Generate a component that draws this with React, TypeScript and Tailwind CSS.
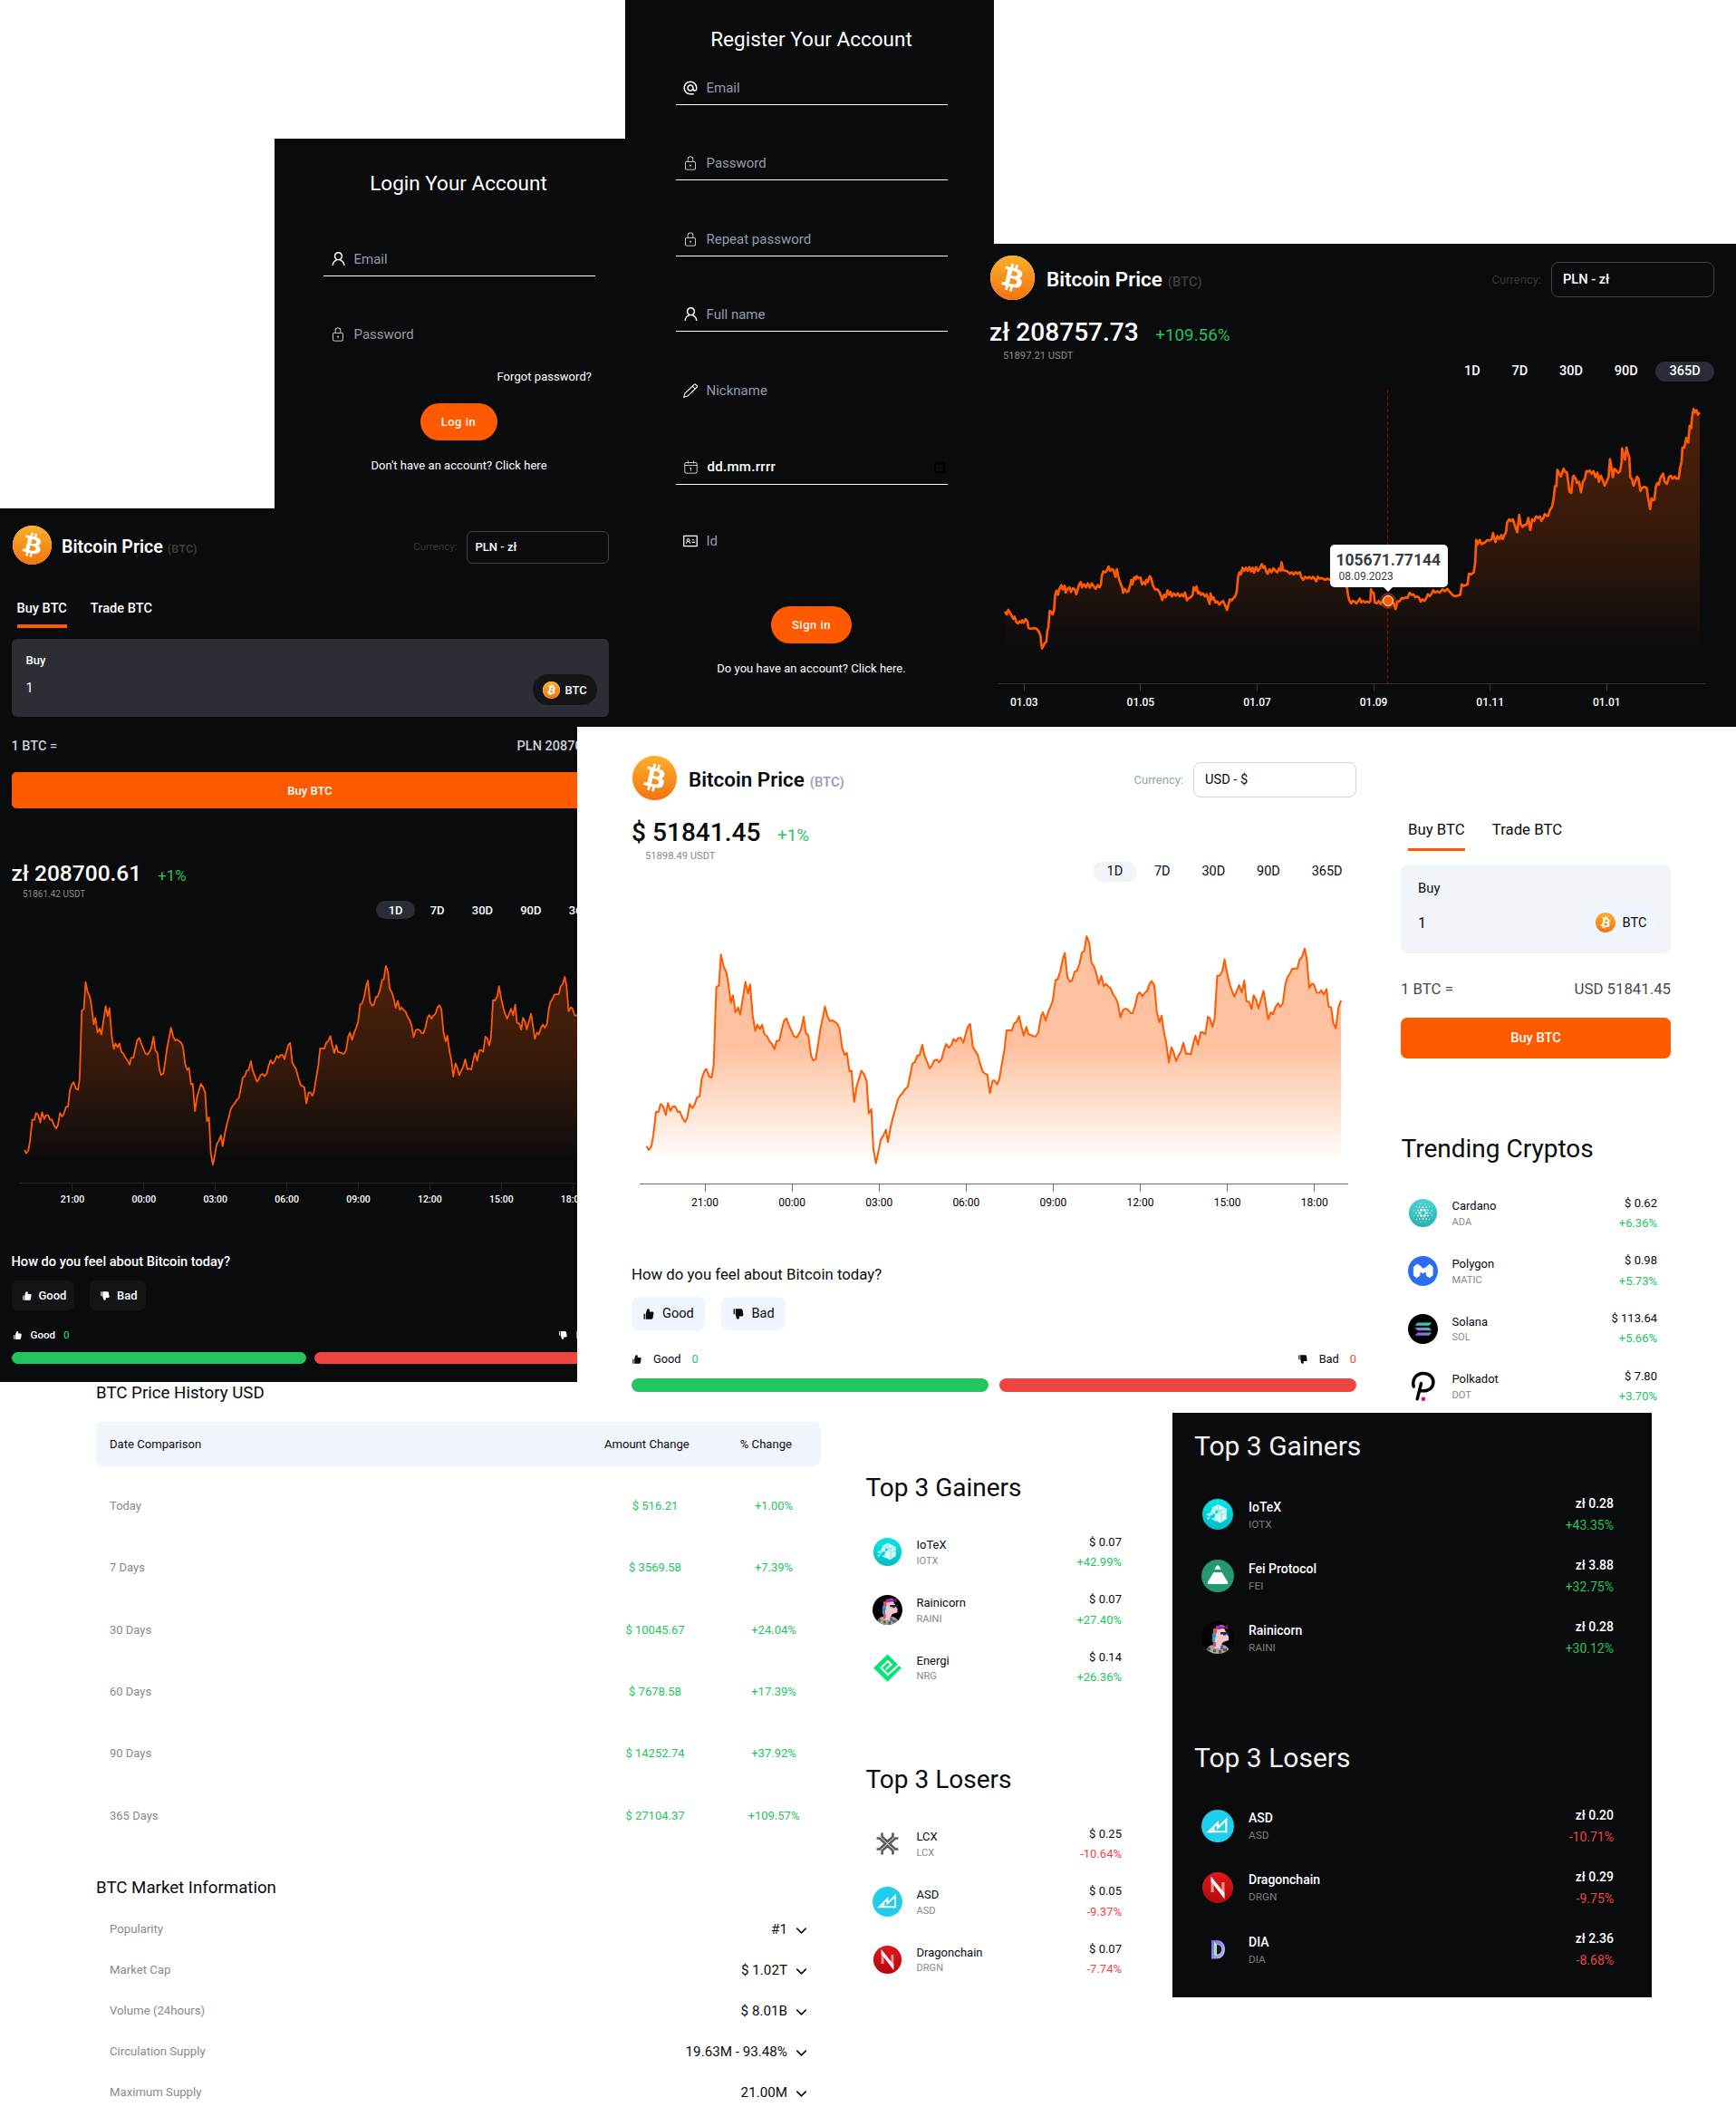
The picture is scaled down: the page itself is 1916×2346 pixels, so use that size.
import React from 'react';
import { AiFillDislike, AiFillLike, AiOutlineIdcard, AiOutlineUser } from 'react-icons/ai';
import { CiCalendarDate, CiLock } from 'react-icons/ci';
import { GoPencil } from 'react-icons/go';
import { MdAlternateEmail } from 'react-icons/md';
import { SiBitcoin } from 'react-icons/si';
import { ChevronDown } from 'lucide-react';

/* ---------- chart data ---------- */

const DAY =
  '130,1380 134,1392 139,1382 143,1345 148,1270 153,1270 157,1245 162,1253 167,1280 171,1242 176,1267 180,1253 185,1253 190,1270 194,1269 199,1290 204,1302 208,1290 213,1245 218,1258 222,1248 227,1224 232,1220 236,1163 241,1140 245,1132 250,1155 255,1160 259,1120 264,870 269,864 273,765 278,803 283,820 287,855 292,920 296,896 301,950 306,935 310,958 320,853 325,890 329,861 334,960 339,1010 343,990 348,1004 352,990 357,1022 362,1028 366,1042 371,1052 376,1068 380,1042 385,1042 390,1005 394,978 399,970 404,993 413,1027 418,1031 422,1022 427,1005 432,965 436,1015 441,1025 446,1087 450,1105 455,1101 460,1050 464,1005 469,965 473,932 478,965 483,979 487,976 492,981 497,988 501,1003 506,1065 511,1087 515,1080 520,1140 524,1138 529,1238 534,1187 538,1165 543,1138 548,1150 553,1170 557,1275 562,1261 566,1390 571,1435 576,1395 580,1360 585,1347 590,1327 594,1367 599,1320 604,1285 608,1262 613,1230 618,1217 622,1210 627,1197 632,1190 636,1158 641,1115 646,1110 650,1090 655,1087 660,1055 664,1088 669,1108 674,1130 678,1123 683,1105 688,1102 692,1111 697,1101 702,1070 706,1052 711,1064 716,1055 720,1036 725,1043 729,1033 734,1032 739,1048 743,1022 748,995 752,988 757,1060 762,1075 766,1085 771,1115 776,1140 780,1147 785,1150 790,1210 795,1170 799,1169 804,1182 808,1165 813,1115 818,1070 822,1008 827,1008 832,1009 837,985 841,982 846,963 850,993 855,1025 860,997 864,1021 869,1023 874,1027 878,1028 883,1015 888,965 892,950 897,977 902,950 906,935 911,912 916,847 920,845 925,820 930,780 934,760 939,838 944,852 948,848 953,820 957,818 962,796 967,758 971,755 976,706 981,728 985,790 990,803 995,828 999,860 1004,834 1009,867 1013,859 1018,868 1022,873 1027,893 1032,905 1036,922 1041,967 1046,942 1050,939 1055,941 1060,952 1064,953 1069,930 1074,893 1078,886 1083,899 1087,889 1092,882 1097,858 1101,850 1106,864 1111,950 1116,983 1120,961 1125,1018 1129,1048 1134,1111 1139,1063 1143,1078 1148,1107 1153,1088 1157,1077 1162,1048 1167,1085 1171,1082 1176,1086 1181,1050 1185,1025 1190,1054 1195,1015 1199,1014 1204,1021 1209,965 1213,970 1218,997 1222,970 1227,832 1232,832 1237,817 1241,780 1246,825 1251,860 1255,880 1260,900 1265,880 1269,863 1274,887 1279,848 1283,915 1288,916 1293,940 1297,896 1302,910 1306,938 1311,910 1316,881 1321,932 1325,973 1330,950 1334,957 1339,933 1344,921 1348,933 1353,921 1358,860 1362,837 1367,825 1371,811 1376,810 1381,810 1385,782 1390,772 1395,746 1399,778 1404,872 1409,858 1413,862 1418,887 1423,888 1427,880 1432,893 1437,876 1441,932 1446,935 1450,985 1455,1001 1460,935 1465,912';

const YEAR =
  '54,435 58,445 61,430 65,440 69,452 72,460 74,452 78,470 81,475 85,468 88,472 90,464 93,472 97,460 101,468 103,490 108,492 114,490 120,492 125,503 128,515 129,535 131,557 134,548 137,540 140,535 142,498 144,490 147,433 150,436 153,445 156,430 158,382 161,366 164,380 167,360 171,348 174,362 178,350 180,372 184,360 188,355 191,370 195,358 199,362 202,378 205,362 208,345 211,338 214,355 218,345 222,355 226,342 230,356 234,342 238,352 242,360 246,348 250,355 253,345 255,315 258,302 262,305 265,300 269,286 272,300 276,295 279,298 283,320 286,295 289,320 293,340 297,355 299,373 302,360 306,370 310,368 314,345 316,330 318,345 322,322 325,328 327,318 331,325 335,322 338,345 342,338 345,345 347,330 350,338 354,318 357,325 361,350 365,362 370,362 374,370 378,385 380,397 384,380 387,388 391,365 394,380 397,370 400,385 404,375 408,383 412,375 416,385 420,378 424,385 427,372 431,398 435,390 439,388 443,380 445,355 448,365 451,352 454,375 457,370 460,380 464,375 468,385 472,378 475,395 478,410 480,375 483,395 486,388 490,405 494,402 498,412 502,405 506,400 510,415 514,430 517,412 520,395 524,398 528,390 531,385 534,370 537,320 540,305 543,312 546,290 550,300 553,290 557,300 560,288 564,302 567,290 570,306 574,288 578,300 582,292 586,278 589,290 592,285 595,302 598,310 602,295 606,305 610,292 614,300 618,305 622,292 625,300 627,272 630,298 635,300 640,303 644,310 648,305 652,312 656,305 660,310 665,305 668,322 672,330 676,320 680,325 684,320 688,326 692,320 696,328 699,335 702,320 706,326 710,324 714,328 718,330 722,326 727,330 740,325 750,330 760,345 763,360 765,385 768,400 771,408 774,400 778,402 782,408 786,400 789,392 792,405 796,400 800,405 804,402 808,405 811,400 812,362 815,372 818,375 820,405 824,408 828,400 832,410 836,402 840,398 847,400 855,402 860,410 863,427 867,402 872,400 876,390 880,392 884,388 888,390 892,373 896,380 900,378 904,388 908,385 912,390 915,402 919,395 923,400 927,390 930,378 934,384 938,375 941,365 945,372 950,368 955,372 960,362 965,368 970,360 974,368 978,375 982,382 987,385 992,382 997,380 1000,345 1004,350 1008,348 1012,345 1015,310 1020,312 1025,305 1028,270 1030,198 1033,212 1037,198 1041,212 1045,208 1049,205 1053,198 1058,200 1062,195 1065,175 1067,190 1070,205 1074,185 1078,195 1082,182 1085,195 1089,180 1092,170 1094,140 1098,130 1102,135 1106,130 1110,150 1115,172 1119,115 1122,145 1126,155 1130,148 1134,148 1138,125 1142,165 1146,130 1150,135 1154,120 1158,125 1162,120 1165,135 1169,125 1172,112 1176,118 1179,118 1183,98 1187,88 1190,65 1193,20 1196,20 1198,-35 1202,-22 1205,-12 1208,-25 1211,-38 1214,-28 1218,-25 1221,10 1223,38 1227,42 1230,-10 1232,-15 1236,-5 1239,10 1243,5 1247,40 1251,5 1255,-5 1258,-30 1262,-28 1265,-32 1269,-22 1273,-30 1277,-10 1281,-25 1284,5 1288,-15 1292,0 1296,18 1300,5 1304,-10 1307,-70 1310,-40 1313,-10 1316,-38 1320,-32 1324,-25 1328,-30 1331,-60 1332,-105 1335,-85 1338,-68 1341,-108 1344,-90 1347,-75 1349,-10 1352,-5 1356,18 1359,5 1363,-12 1366,-5 1370,35 1374,25 1378,22 1383,25 1386,60 1390,96 1393,60 1396,66 1399,65 1402,20 1405,10 1408,15 1411,-5 1414,-15 1417,-22 1420,5 1425,12 1429,-10 1433,-15 1437,-5 1441,-12 1445,-5 1449,-5 1452,-40 1455,-60 1457,-108 1461,-108 1465,-140 1469,-125 1472,-180 1475,-172 1477,-210 1480,-236 1483,-225 1486,-232 1489,-218 1493,-224';

/* ---------- icons ---------- */

function BitcoinLogo({ className }: { className: string }) {
  return (
    <span className={`block shrink-0 rounded-full bg-white ${className}`}>
      <svg className="absolute size-0">
        <defs>
          <linearGradient id="btc" x1="0" y1="0" x2="0" y2="1">
            <stop offset="0" stopColor="#fbb02a" />
            <stop offset="1" stopColor="#f4730f" />
          </linearGradient>
        </defs>
      </svg>
      <SiBitcoin className="size-full" fill="url(#btc)" />
    </span>
  );
}

const dots = (n: number, r: number, size: number, turn = 0) =>
  Array.from({ length: n }, (_, i) => {
    const a = ((i * 360) / n + turn) * (Math.PI / 180);
    return <circle key={`${r}-${turn}-${i}`} cx={18 + r * Math.cos(a)} cy={18 + r * Math.sin(a)} r={size} fill="#fff" />;
  });

const coinArt: Record<string, React.ReactNode> = {
  ADA: (
    <>
      <linearGradient id="ada" x1="0" y1="0" x2="0" y2="1">
        <stop offset="0" stopColor="#4cd5d2" />
        <stop offset="1" stopColor="#27b0ad" />
      </linearGradient>
      <circle cx="18" cy="18" r="17" fill="url(#ada)" />
      {dots(6, 3.9, 1.5)}
      {dots(6, 6.8, 1, 30)}
      {dots(6, 8.2, 0.8)}
      {dots(12, 11, 0.6, 15)}
    </>
  ),
  MATIC: (
    <>
      <circle cx="18" cy="18" r="18" fill="#2a6df4" />
      <path
        d="M7 13.2 11 10l3.5 1.8L18 15.5l3.5-1.5L26 10l3.6 3v10.2L26 26l-3.8-2.6v-5L18 20.6l-3.8-2.2v4.8L10.6 26 7 23.4z"
        fill="#fff"
        stroke="#fff"
        strokeLinejoin="round"
      />
    </>
  ),
  SOL: (
    <>
      <linearGradient id="sol" x1="0" y1="1" x2="0.6" y2="0">
        <stop offset="0" stopColor="#b345e8" />
        <stop offset="0.55" stopColor="#6f93cf" />
        <stop offset="1" stopColor="#20dca0" />
      </linearGradient>
      <circle cx="18" cy="18" r="18" fill="#000" />
      <path d="M11.5 10.3h17.2l-3.3 3.5H8.2zM8.2 16.3h17.2l3.3 3.5H11.5zM11.5 22.3h17.2l-3.3 3.5H8.2z" fill="url(#sol)" />
    </>
  ),
  DOT: (
    <>
      <path
        d="M6.800 18.500C4.500 10 10 2.600 18.500 2.600c7 0 12 4.700 12 10.600 0 6.300-4.700 10.500-12.200 10.500h-3M15.800 14.800 11.200 33.500"
        fill="none"
        stroke="#000"
        strokeWidth="3.800"
        strokeLinecap="round"
      />
      <circle cx="18.500" cy="33.500" r="2.400" fill="#e6007a" />
    </>
  ),
  IOTX: (
    <>
      <linearGradient id="iotx" x1="0" y1="0" x2="0" y2="1">
        <stop offset="0" stopColor="#02e6e6" />
        <stop offset="1" stopColor="#04bcc4" />
      </linearGradient>
      <circle cx="18" cy="18" r="17" fill="url(#iotx)" />
      <path d="M18.500 7 28 12v11l-7 4.500-6-3V18l-4-3.500 1-4z" fill="#d8fbfb" />
      <path d="M18.500 7v7l9.500-2M15 18l7-4v13M22 19l6-3M11 10.500l7.500 3.500-3.500 4" stroke="#6fe3e6" strokeWidth="0.900" fill="none" />
      <path d="m10 14 5 3-5 2.500zM5 18l5-2v5zM11 23l4-2 1 5zM6 21l4 .5-3 3z" fill="#9cf1f1" />
      <path d="m16 13 3 3-4 1z" fill="#02ccd2" />
    </>
  ),
  RAINI: (
    <>
      <clipPath id="rc">
        <circle cx="18" cy="18" r="18" />
      </clipPath>
      <g clipPath="url(#rc)">
        <path d="M0 0h36v36H0z" fill="#000" />
        <path d="M5 36c0-7 4-10 9-10h8c5 0 9 3 10 10z" fill="#a9a48f" />
        <path d="M7 29h3v3H7zM13 31h3v3h-3zM24 30h4v3h-4zM19 32h3v4h-3z" fill="#5c5a52" />
        <path d="M16 8h9l5 9v4l-6 2-2 3v4h-7V18z" fill="#f3c5cd" />
        <path d="M20 4h4l3 3h-6z" fill="#c43dd0" />
        <path d="M16 5h5v4h-5z" fill="#a12bc9" />
        <path d="M13 8h4v5h-4z" fill="#e05a35" />
        <path d="M12 13h4v5h-4z" fill="#2f8fe0" />
        <path d="M12 18h3v5h-3z" fill="#19b5c4" />
        <path d="M13 23h3v5h-3z" fill="#e04a70" />
        <path d="M21 12h9v2.500h-3v1h-3v-1h-3z" fill="#1f2b45" />
        <path d="m26 8 3-6v7z" fill="#8c2440" />
        <path d="M21 27h3v4h-3z" fill="#3564d8" />
      </g>
    </>
  ),
  NRG: (
    <>
      <path d="M18 1.500 34.800 18 18 34.500 1.200 18z" fill="#00e676" />
      <path d="M36 10.500 18.500 26.300l-8.300-8.500 8-7.800 4.300 4-6.300 5.700" fill="none" stroke="#fff" strokeWidth="2.300" />
      <path d="m30 9.500 6-4v7.500l-2.500 1.500z" fill="#fff" />
    </>
  ),
  LCX: (
    <g fill="none" stroke="#5a5a5a" strokeWidth="2.800">
      <path d="M11.500 5v4.500L18 15.500l6.500-6V5M11.500 31v-4.500L18 20.500l6.500 6V31" />
      <path d="M5 11.500h3.500l7 6.500-7 6.500H5M31 11.500h-3.500l-7 6.500 7 6.500H31" />
    </g>
  ),
  ASD: (
    <>
      <circle cx="18" cy="18" r="18" fill="#1fcdec" />
      <path d="M8 24.200 18 14.500v5.500L27.300 11v13.200zM13.500 24v-3.500" fill="none" stroke="#fff" strokeWidth="2.100" />
    </>
  ),
  DRGN: (
    <>
      <linearGradient id="drgn" x1="0" y1="0" x2="0" y2="1">
        <stop offset="0" stopColor="#e0161a" />
        <stop offset="1" stopColor="#b00a0e" />
      </linearGradient>
      <circle cx="18" cy="18" r="17" fill="url(#drgn)" />
      <path d="M10.500 9.500h3.200V23h-3.200zM22.300 12h3.200v13h-3.200z" fill="#ef8e90" />
      <path d="M10.500 5.500 25.500 24v6.500L10.500 11z" fill="#fff" />
    </>
  ),
  FEI: (
    <>
      <circle cx="18" cy="18" r="18" fill="#22996e" />
      <path d="M16.800 6.500h2.400L21.500 11h-7zM13.500 14h9l6.500 10.500V27H7v-2.500z" fill="#fff" />
    </>
  ),
  DIA: (
    <>
      <linearGradient id="dia" x1="0" y1="0" x2="1" y2="0.600">
        <stop offset="0" stopColor="#7a5cf0" />
        <stop offset="1" stopColor="#b3b8ea" />
      </linearGradient>
      <path d="M11 8h6c6 0 9 4.500 9 10s-3.500 10.500-9 10.500h-6z" fill="url(#dia)" />
      <path d="M17 13c3.600.3 5 2 5 5.200s-1.700 5-5 5.300z" fill="#14121f" />
      <path d="M14 9.500 17 12v14l-3-2z" fill="#a8e6b4" />
    </>
  ),
};

/* ---------- account forms ---------- */

type FieldProps = { icon: React.ReactNode; label: string; line?: boolean; className?: string; date?: boolean };

function Field({ icon, label, line = true, className = '', date = false }: FieldProps) {
  return (
    <div
      className={`flex h-[38px] w-[300px] items-center gap-[9px] border-b pl-2 ${line ? 'border-white' : 'border-transparent'} ${className}`}
    >
      <span className="flex size-4 items-center justify-center text-white">{icon}</span>
      {date ? (
        <>
          <span className="pl-[1.500px] text-[15px] leading-none font-medium tracking-[0.300px] text-white">{label}</span>
          <svg viewBox="0 0 12 13" className="mr-[3px] ml-auto h-[13px] w-3" fill="none" stroke="#000" strokeWidth="1.500">
            <path d="M1 2h10v10H1zM1 3h10M3 0v2M9 0v2" />
          </svg>
        </>
      ) : (
        <span className="pt-0.5 pl-[0.500px] text-[15px] leading-none text-[#939cab]">{label}</span>
      )}
    </div>
  );
}

function LoginPanel() {
  return (
    <section className="absolute top-[153px] left-[303px] flex h-[420px] w-[408px] flex-col items-center bg-[#0a0b0d] text-white">
      <h2 className="mr-0.5 flex h-[98px] items-center text-[22.500px] leading-none">Login Your Account</h2>
      <Field className="mt-4" icon={<AiOutlineUser size={19} className="shrink-0" />} label="Email" />
      <Field className="mt-[45px]" icon={<CiLock size={18} className="shrink-0" />} label="Password" line={false} />
      <div className="mt-[18px] flex h-5 w-[292px] items-center justify-end text-[13px] tracking-[0.050px]">Forgot password?</div>
      <button className="mt-[19px] mr-0.5 h-[41px] w-[85px] rounded-full bg-[#ff5a00] text-[13px] font-medium tracking-[0.500px]">
        Log in
      </button>
      <p className="mt-[18px] mr-px text-[13px] leading-5 tracking-[0.040px]">Don&apos;t have an account? Click here</p>
    </section>
  );
}

function RegisterPanel() {
  return (
    <section className="absolute top-0 left-[690px] h-[802px] w-[407px] bg-[#0a0b0d] text-white">
      <div className="flex w-[412px] flex-col items-center">
        <h2 className="mt-7 mr-px h-[30px] text-[22.500px] leading-[30px]">Register Your Account</h2>
        <Field className="mt-5" icon={<MdAlternateEmail size={18} className="shrink-0" />} label="Email" />
        <Field className="mt-[45px]" icon={<CiLock size={18} className="shrink-0" />} label="Password" />
        <Field className="mt-[46px]" icon={<CiLock size={18} className="shrink-0" />} label="Repeat password" />
        <Field className="mt-[45px]" icon={<AiOutlineUser size={19} className="shrink-0" />} label="Full name" />
        <Field className="mt-[46px]" icon={<GoPencil size={18} className="shrink-0" />} label="Nickname" line={false} />
        <Field className="mt-[47px]" icon={<CiCalendarDate size={19} className="shrink-0" />} label="dd.mm.rrrr" date />
        <Field className="mt-[43px]" icon={<AiOutlineIdcard size={18} className="shrink-0" />} label="Id" line={false} />
        <button className="mt-[53px] mr-px h-[41px] w-[89px] rounded-full bg-[#ff5a00] text-[13px] font-medium tracking-[0.500px]">
          Sign in
        </button>
        <p className="mt-[18px] mr-px text-[13px] leading-5 tracking-[0.040px]">Do you have an account? Click here.</p>
      </div>
    </section>
  );
}

/* ---------- price blocks ---------- */

function PriceHeader({ dark, small, currency }: { dark?: boolean; small?: boolean; currency: string }) {
  return (
    <div className={`flex items-center ${small ? 'h-[47px]' : 'h-[53px]'}`}>
      <BitcoinLogo className={small ? 'ml-[1.500px] size-[43px] self-start' : 'ml-px size-[49px] self-start'} />
      <div className={`flex items-baseline ${small ? 'ml-[11px] gap-[5px]' : 'ml-[13px] gap-1.5'}`}>
        <h1
          className={`leading-none font-semibold ${small ? 'text-[19.600px]' : 'text-[22.400px]'} ${dark ? 'text-white' : 'text-[#0a0b0d]'}`}
        >
          Bitcoin Price
        </h1>
        <span
          className={`leading-none font-semibold ${small ? 'text-[12.800px]' : 'text-[14.800px]'} ${dark ? 'text-[#3f3b38]' : 'text-[#94a3b8]'}`}
        >
          (BTC)
        </span>
      </div>
      <span
        className={`ml-auto leading-none ${small ? 'mr-[10px] text-[11.500px]' : 'mr-[11px] text-[13px]'} ${dark ? 'text-[#3a3633]' : 'text-[#94a3b8]'}`}
      >
        Currency:
      </span>
      <div
        className={`flex items-center border leading-none ${small ? 'h-9 w-[157px] rounded-[6px] pl-[9px] text-[13px]' : 'h-[39px] w-[180px] rounded-lg pl-3 text-[14.600px]'} ${dark ? 'border-[#44403c] font-medium text-white' : 'border-[#cbd5e1] text-[#0a0b0d]'}`}
      >
        {currency}
      </div>
    </div>
  );
}

function PriceLine({ dark, small, price, change, usdt }: { dark?: boolean; small?: boolean; price: string; change: string; usdt: string }) {
  return (
    <>
      <div className={`flex items-baseline ${small ? 'h-[30px] gap-[18px]' : 'h-[34px] gap-[18.500px]'}`}>
        <span
          className={`font-medium ${small ? 'text-[24.500px] leading-[30px]' : 'text-[28.100px] leading-[34px]'} ${dark ? 'text-white' : 'text-[#0a0b0d]'}`}
        >
          {price}
        </span>
        <span className={`leading-none text-[#22c55e] ${small ? 'text-[16.800px]' : 'text-[18.800px]'}`}>{change}</span>
      </div>
      <div
        className={`mt-px h-3.5 text-[#8a8a8a] ${small ? 'ml-[12.500px] text-[10px] leading-[14px]' : 'ml-[15px] text-[11.200px] leading-[15px]'}`}
      >
        {usdt}
      </div>
    </>
  );
}

function Ranges({ dark, small, active }: { dark?: boolean; small?: boolean; active: string }) {
  return (
    <div className={`flex justify-end ${small ? 'h-5 gap-[3.800px]' : 'h-[22px] gap-1'}`}>
      {['1D', '7D', '30D', '90D', '365D'].map((r) => (
        <span
          key={r}
          className={`flex items-center rounded-full leading-none ${small ? 'px-[13.200px] text-[13px] font-medium' : 'px-[15.400px] pt-px text-[14.500px]'} ${dark ? 'font-medium text-white' : 'text-[#0a0b0d]'} ${r === active ? (dark ? 'bg-[#2b2d36]' : 'bg-[#f1f5f9]') : ''}`}
        >
          {r}
        </span>
      ))}
    </div>
  );
}

function Gradient({ id, dark }: { id: string; dark?: boolean }) {
  return (
    <linearGradient id={id} x1="0" y1="0" x2="0" y2="1">
      {dark ? (
        <>
          <stop offset="0" stopColor="#ff5a00" stopOpacity="0.280" />
          <stop offset="0.500" stopColor="#ff5a00" stopOpacity="0.180" />
          <stop offset="1" stopColor="#ff5a00" stopOpacity="0" />
        </>
      ) : (
        <>
          <stop offset="0" stopColor="#ff5a00" stopOpacity="0.360" />
          <stop offset="0.480" stopColor="#ff5a00" stopOpacity="0.380" />
          <stop offset="1" stopColor="#ff5a00" stopOpacity="0" />
        </>
      )}
    </linearGradient>
  );
}

function DayChart({ dark }: { dark?: boolean }) {
  const id = dark ? 'day-dark' : 'day-light';
  return (
    <svg
      viewBox="115 700 1362 800"
      preserveAspectRatio="none"
      className={`block ${dark ? 'mt-[50px] ml-[7.500px] h-[241px] w-[642px]' : 'mt-[58px] ml-2 h-[275px] w-[782px]'}`}
    >
      <Gradient id={id} dark={dark} />
      <polygon points={`130,1414 ${DAY} 1465,1414`} fill={`url(#${id})`} />
      <polyline
        points={DAY}
        fill="none"
        stroke="#ff5a00"
        strokeWidth={dark ? 1.8 : 2}
        strokeLinejoin="round"
        vectorEffect="non-scaling-stroke"
      />
    </svg>
  );
}

const HOURS = ['21:00', '00:00', '03:00', '06:00', '09:00', '12:00', '15:00', '18:00'];

function Feeling({ dark, small }: { dark?: boolean; small?: boolean }) {
  const tone = dark ? 'text-white font-medium' : 'text-[#0a0b0d]';
  const chip = `flex items-center ${small ? 'h-[33px] rounded-[7px] text-[13px] pl-[11px] gap-[7px]' : 'h-[37px] rounded-lg text-[14.600px] pl-3 gap-2'} ${dark ? 'bg-[#131418]' : 'bg-[#f0f5fe]'}`;
  const icon = small ? 12 : 14;
  const tiny = small ? 11 : 12;
  return (
    <div className={tone}>
      <p className={small ? 'mt-[52px] text-[14.600px] leading-5' : 'mt-[60px] text-[16.800px] leading-6'}>
        How do you feel about Bitcoin today?
      </p>
      <div className={`flex ${small ? 'mt-[11px] gap-[17px]' : 'mt-[13px] gap-[18px]'}`}>
        <span className={`${chip} ${small ? 'w-[69.500px]' : 'w-[80.500px]'}`}>
          <AiFillLike size={icon} /> Good
        </span>
        <span className={`${chip} ${small ? 'w-[61.500px]' : 'w-[71px]'}`}>
          <AiFillDislike size={icon} /> Bad
        </span>
      </div>
      <div
        className={`flex items-center leading-none ${small ? 'mt-5 h-[15px] gap-[9px] text-[11.600px]' : 'mt-6 h-4 gap-3 text-[12.800px]'}`}
      >
        <AiFillLike size={tiny} className={small ? 'ml-px' : ''} />
        <span>Good</span>
        <span className="text-[#22c55e]">0</span>
        <AiFillDislike size={tiny} className="ml-auto" />
        <span>Bad</span>
        <span className="text-[#ef4444]">0</span>
      </div>
      <div className={`flex ${small ? 'mt-[11px] h-[13px] gap-[9px]' : 'mt-[13px] h-[15px] gap-3'}`}>
        <span className="flex-1 rounded-full bg-[#22c55e]" />
        <span className="flex-1 rounded-full bg-[#ef4444]" />
      </div>
    </div>
  );
}

/* ---------- panels ---------- */

function CompactPanel() {
  return (
    <section className="absolute top-[561px] left-0 h-[964px] w-[690px] overflow-hidden bg-[#0a0b0d] pr-[18.500px] pl-[12.500px] text-white">
      <div className="mt-[19px]">
        <PriceHeader dark small currency="PLN - zł" />
      </div>
      <div className="mt-[34px] flex gap-[26px] pl-1.5 text-[14.600px] leading-5 font-medium">
        <span>
          Buy BTC
          <span className="mt-[8px] block h-[3.500px] bg-[#ff5a00]" />
        </span>
        <span>Trade BTC</span>
      </div>
      <div className="mt-[12.500px] h-[86px] rounded-[6px] bg-[#2c2d35] pt-3.5 pr-[13px] pl-4 font-medium">
        <div className="text-[13px] leading-5">Buy</div>
        <div className="mt-[5px] flex items-center justify-between leading-none">
          <span className="pb-0.5 text-[14.500px] font-normal">1</span>
          <span className="flex h-[34px] w-[71px] items-center gap-1.5 rounded-full bg-[#141519] pl-[11px] text-[13px]">
            <BitcoinLogo className="size-[19px]" />
            BTC
          </span>
        </div>
      </div>
      <div className="mt-[23px] flex justify-between text-[14.500px] leading-5 font-medium text-[#cbd0d8]">
        <span>1 BTC =</span>
        <span>PLN 208700.61</span>
      </div>
      <button className="mt-[18px] block h-10 w-full rounded-[5px] bg-[#ff5a00] pt-px text-[13px] font-medium">Buy BTC</button>
      <div className="mt-[57px]">
        <PriceLine dark small price="zł 208700.61" change="+1%" usdt="51861.42 USDT" />
        <Ranges dark small active="1D" />
      </div>
      <DayChart dark />
      <div className="ml-2 flex w-[642px] border-t border-[#222325] pl-[20px]">
        {HOURS.map((h) => (
          <div key={h} className="flex w-[78.900px] shrink-0 flex-col items-center text-[10.500px] font-medium text-white">
            <span className="h-2 w-px bg-[#222325]" />
            <span className="mt-1 leading-[12px]">{h}</span>
          </div>
        ))}
      </div>
      <Feeling dark small />
    </section>
  );
}

function YearPanel() {
  return (
    <section className="absolute top-[269px] left-[1080px] h-[533px] w-[836px] overflow-hidden border-b border-black bg-[#0a0b0d] pr-6 pl-3">
      <div className="mt-[13px]">
        <PriceHeader dark currency="PLN - zł" />
      </div>
      <div className="mt-[15px]">
        <PriceLine dark price="zł 208757.73" change="+109.56%" usdt="51897.21 USDT" />
      </div>
      <Ranges dark active="365D" />
      <div className="relative mt-[9px] ml-[9px] h-[324px] w-[782px]">
        <svg viewBox="39 -300 1467 973" preserveAspectRatio="none" className="block h-full w-full">
          <Gradient id="year" dark />
          <line x1="847" y1="-300" x2="847" y2="673" stroke="#b0080c" strokeWidth="1" strokeDasharray="4 3" vectorEffect="non-scaling-stroke" />
          <polygon points={`54,576 ${YEAR} 1493,576`} fill="url(#year)" />
          <polyline points={YEAR} fill="none" stroke="#ff5a00" strokeWidth="2.700" strokeLinejoin="round" vectorEffect="non-scaling-stroke" />
        </svg>
        <span className="absolute top-[224px] left-[422px] size-[18px] rounded-full bg-[#ff5a00]/40" />
        <span className="absolute top-[227px] left-[425px] size-3 rounded-full border border-white bg-[#ff5a00]" />
        <div className="absolute top-[171px] left-[367px] h-[47px] w-[130px] rounded-[5px] bg-white text-[#373d3f]">
          <div className="pt-[7px] pl-[6.500px] text-[17.500px] leading-[21px] font-bold">105671.77144</div>
          <div className="pl-[9.500px] text-[12px] leading-[14px]">08.09.2023</div>
          <svg viewBox="0 0 12 6" className="absolute top-[46px] left-[58px] h-1.5 w-3">
            <path d="M0 0h12L6 6z" fill="#fff" />
          </svg>
        </div>
      </div>
      <div className="ml-[9px] flex w-[782px] border-t border-[#2f3133]">
        {['01.03', '01.05', '01.07', '01.09', '01.11', '01.01'].map((d) => (
          <div key={d} className="flex w-[128.600px] shrink-0 flex-col items-center text-[12px] text-white first:-ml-[35px]">
            <span className="h-2 w-px bg-[#2f3133]" />
            <span className="mt-[5px] leading-[14px] font-medium">{d}</span>
          </div>
        ))}
      </div>
    </section>
  );
}

type Coin = { name: string; symbol: string; price: string; change: string };

function CoinList({ title, coins, dark, className = '' }: { title: string; coins: Coin[]; dark?: boolean; className?: string }) {
  return (
    <div className={className}>
      <h2 className={dark ? 'pl-px text-[30px] leading-9 text-[#f3f3f3]' : 'pl-[0.500px] text-[28px] leading-[34px] text-[#0a0b0d]'}>
        {title}
      </h2>
      <div className={dark ? 'mt-[23px]' : 'mt-[22px]'}>
        {coins.map((c) => (
          <div key={c.symbol} className={`flex items-center ${dark ? 'h-[68.200px] pl-[9px]' : 'h-[63.700px] pr-[15px] pl-2'}`}>
            <svg viewBox="0 0 36 36" className={dark ? 'size-9' : 'size-[33px]'}>
              {coinArt[c.symbol]}
            </svg>
            <div className={dark ? 'ml-4 pt-[3px]' : 'ml-[15.500px] pt-[2px]'}>
              <div className={dark ? 'text-[14px] leading-[19px] font-medium text-white' : 'text-[13px] leading-[17.500px] text-[#0a0b0d]'}>
                {c.name}
              </div>
              <div className={dark ? 'text-[11.800px] leading-[19px] text-[#807c78]' : 'text-[11.100px] leading-[17.500px] text-[#8a8a8a]'}>
                {c.symbol}
              </div>
            </div>
            <div className={`ml-auto text-right ${dark ? 'text-[14px] leading-6 text-white' : 'text-[13px] leading-[22.300px] text-[#0a0b0d]'}`}>
              <div className={dark ? 'font-medium' : ''}>{c.price}</div>
              <div className={c.change.startsWith('+') ? 'text-[#22c55e]' : 'text-[#ef4444]'}>{c.change}</div>
            </div>
          </div>
        ))}
      </div>
    </div>
  );
}

function LightPanel() {
  return (
    <section className="absolute top-[802px] left-[637px] flex h-[757px] w-[1279px] gap-[49px] overflow-hidden bg-white pl-[60px]">
      <div className="w-[800px] shrink-0 pt-8">
        <PriceHeader currency="USD - $" />
        <div className="mt-[15px]">
          <PriceLine price="$ 51841.45" change="+1%" usdt="51898.49 USDT" />
          <Ranges active="1D" />
        </div>
        <DayChart />
        <div className="ml-[9px] flex w-[782px] border-t border-[#6e7073] pl-[24px]">
          {HOURS.map((h) => (
            <div key={h} className="flex w-[96.100px] shrink-0 flex-col items-center text-[12px] text-black">
              <span className="h-2 w-px bg-[#6e7073]" />
              <span className="mt-[5px] leading-[14px]">{h}</span>
            </div>
          ))}
        </div>
        <Feeling />
      </div>
      <div className="w-[298px] shrink-0 pt-[101px] text-[#0a0b0d]">
        <div className="flex gap-[30px] pl-[8px] text-[16.800px] leading-6">
          <span>
            Buy BTC
            <span className="mt-[9px] block h-[3px] bg-[#ff5a00]" />
          </span>
          <span>Trade BTC</span>
        </div>
        <div className="mt-[15px] h-[98px] rounded-lg bg-[#f1f5f9] pt-4 pr-4 pl-[19px]">
          <div className="text-[14.800px] leading-5">Buy</div>
          <div className="mt-[9px] flex items-center justify-between leading-none">
            <span className="pt-px text-[16px]">1</span>
            <span className="flex h-[38px] w-[78px] items-center gap-2 rounded-full bg-[#f1f5fe] pl-[10.500px] text-[14.600px]">
              <BitcoinLogo className="size-[22px]" />
              BTC
            </span>
          </div>
        </div>
        <div className="mt-[27px] flex justify-between text-[16.800px] leading-6 text-[#48494d]">
          <span>1 BTC =</span>
          <span>USD 51841.45</span>
        </div>
        <button className="mt-5 block h-[45px] w-full rounded-[7px] bg-[#ff5a00] text-[14.700px] font-medium text-white">Buy BTC</button>
        <CoinList
          className="mt-[83px]"
          title="Trending Cryptos"
          coins={[
            { name: 'Cardano', symbol: 'ADA', price: '$ 0.62', change: '+6.36%' },
            { name: 'Polygon', symbol: 'MATIC', price: '$ 0.98', change: '+5.73%' },
            { name: 'Solana', symbol: 'SOL', price: '$ 113.64', change: '+5.66%' },
            { name: 'Polkadot', symbol: 'DOT', price: '$ 7.80', change: '+3.70%' },
          ]}
        />
      </div>
    </section>
  );
}

const HISTORY = [
  ['Today', '$ 516.21', '+1.00%'],
  ['7 Days', '$ 3569.58', '+7.39%'],
  ['30 Days', '$ 10045.67', '+24.04%'],
  ['60 Days', '$ 7678.58', '+17.39%'],
  ['90 Days', '$ 14252.74', '+37.92%'],
  ['365 Days', '$ 27104.37', '+109.57%'],
];

const MARKET = [
  ['Popularity', '#1'],
  ['Market Cap', '$ 1.02T'],
  ['Volume (24hours)', '$ 8.01B'],
  ['Circulation Supply', '19.63M - 93.48%'],
  ['Maximum Supply', '21.00M'],
];

function HistoryPanel() {
  return (
    <section className="absolute top-[1525px] left-[106px] w-[800px] text-[#0a0b0d]">
      <h2 className="text-[18.700px] leading-6">BTC Price History USD</h2>
      <div className="mt-5 flex h-[49px] items-center rounded-lg bg-[#f1f5fe] pr-[32px] pl-[15px] text-[13.100px] leading-none">
        <span>Date Comparison</span>
        <span className="ml-auto">Amount Change</span>
        <span className="ml-[56px]">% Change</span>
      </div>
      <div className="mt-[9px]">
        {HISTORY.map(([day, amount, change]) => (
          <div key={day} className="flex h-[68.450px] items-center pr-[2px] pl-[15px] text-[13px] leading-none text-[#22c55e]">
            <span className="text-[#8a8a8a]">{day}</span>
            <span className="ml-auto w-[100px] text-center">{amount}</span>
            <span className="ml-[31px] w-[100px] text-center">{change}</span>
          </div>
        ))}
      </div>
      <h2 className="mt-[33px] text-[18.700px] leading-6">BTC Market Information</h2>
      <div className="mt-[11.500px]">
        {MARKET.map(([label, value]) => (
          <div key={label} className="flex h-[45.100px] items-center pr-[12.500px] pl-[15px] leading-none">
            <span className="text-[13.200px] text-[#8a8a8a]">{label}</span>
            <span className="ml-auto pt-px text-[15.200px]">{value}</span>
            <ChevronDown size={19} className="mt-[3px] ml-[5.500px]" />
          </div>
        ))}
      </div>
    </section>
  );
}

function MoversLight() {
  return (
    <section className="absolute top-[1625px] left-[955px] w-[298px]">
      <CoinList
        title="Top 3 Gainers"
        coins={[
          { name: 'IoTeX', symbol: 'IOTX', price: '$ 0.07', change: '+42.99%' },
          { name: 'Rainicorn', symbol: 'RAINI', price: '$ 0.07', change: '+27.40%' },
          { name: 'Energi', symbol: 'NRG', price: '$ 0.14', change: '+26.36%' },
        ]}
      />
      <CoinList
        className="mt-[75px]"
        title="Top 3 Losers"
        coins={[
          { name: 'LCX', symbol: 'LCX', price: '$ 0.25', change: '-10.64%' },
          { name: 'ASD', symbol: 'ASD', price: '$ 0.05', change: '-9.37%' },
          { name: 'Dragonchain', symbol: 'DRGN', price: '$ 0.07', change: '-7.74%' },
        ]}
      />
    </section>
  );
}

function MoversDark() {
  return (
    <section className="absolute top-[1559px] left-[1294px] h-[645px] w-[529px] bg-[#0a0b0d] pt-[19px] pr-[42px] pl-[23px]">
      <CoinList
        dark
        title="Top 3 Gainers"
        coins={[
          { name: 'IoTeX', symbol: 'IOTX', price: 'zł 0.28', change: '+43.35%' },
          { name: 'Fei Protocol', symbol: 'FEI', price: 'zł 3.88', change: '+32.75%' },
          { name: 'Rainicorn', symbol: 'RAINI', price: 'zł 0.28', change: '+30.12%' },
        ]}
      />
      <CoinList
        dark
        className="mt-[80px]"
        title="Top 3 Losers"
        coins={[
          { name: 'ASD', symbol: 'ASD', price: 'zł 0.20', change: '-10.71%' },
          { name: 'Dragonchain', symbol: 'DRGN', price: 'zł 0.29', change: '-9.75%' },
          { name: 'DIA', symbol: 'DIA', price: 'zł 2.36', change: '-8.68%' },
        ]}
      />
    </section>
  );
}

export default function App() {
  return (
    <main className="relative h-[2346px] w-[1916px] overflow-hidden bg-white [font-family:Roboto,sans-serif]">
      <LoginPanel />
      <CompactPanel />
      <RegisterPanel />
      <YearPanel />
      <LightPanel />
      <HistoryPanel />
      <MoversLight />
      <MoversDark />
    </main>
  );
}
